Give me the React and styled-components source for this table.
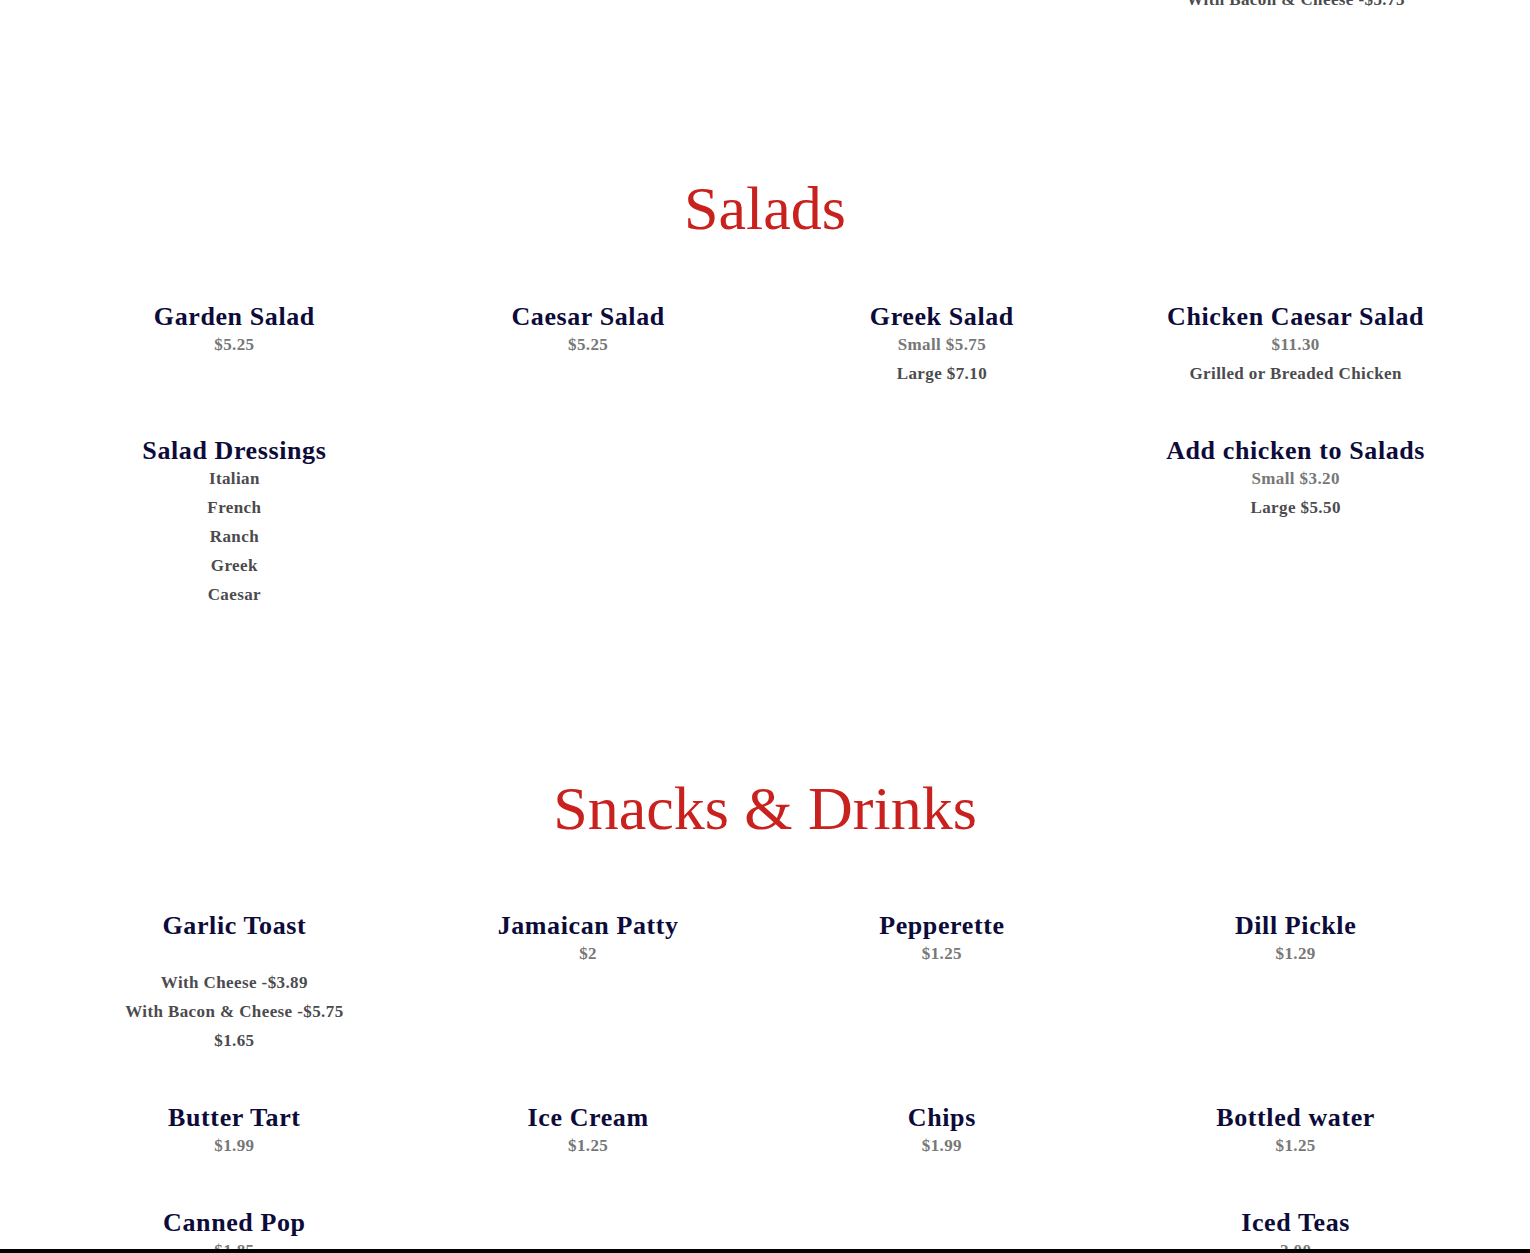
import styled, { createGlobalStyle } from "styled-components"

const GlobalStyle = createGlobalStyle`
  html {
    overflow: hidden;
  }
  html, body {
    margin: 0;
    padding: 0;
    background: #fff;
  }
  body {
    font-family: "Liberation Serif", "Times New Roman", serif;
  }
`

const salads = [
  { name: "Garden Salad", lines: [["$5.25", "price"]] },
  { name: "Caesar Salad", lines: [["$5.25", "price"]] },
  { name: "Greek Salad", lines: [["Small $5.75", "price"], ["Large $7.10", "note"]] },
  { name: "Chicken Caesar Salad", lines: [["$11.30", "price"], ["Grilled or Breaded Chicken", "note"]] },
  {
    name: "Salad Dressings",
    lines: [["Italian", "note"], ["French", "note"], ["Ranch", "note"], ["Greek", "note"], ["Caesar", "note"]]
  },
  null,
  null,
  { name: "Add chicken to Salads", lines: [["Small $3.20", "price"], ["Large $5.50", "note"]] }
]

const snacks = [
  {
    name: "Garlic Toast",
    lines: [["", "blank"], ["With Cheese -$3.89", "note"], ["With Bacon & Cheese -$5.75", "note"], ["$1.65", "note"]]
  },
  { name: "Jamaican Patty", lines: [["$2", "price"]] },
  { name: "Pepperette", lines: [["$1.25", "price"]] },
  { name: "Dill Pickle", lines: [["$1.29", "price"]] },
  { name: "Butter Tart", lines: [["$1.99", "price"]] },
  { name: "Ice Cream", lines: [["$1.25", "price"]] },
  { name: "Chips", lines: [["$1.99", "price"]] },
  { name: "Bottled water", lines: [["$1.25", "price"]] },
  { name: "Canned Pop", lines: [["$1.85", "price"]] },
  null,
  null,
  { name: "Iced Teas", lines: [["2.00", "price"]] }
]

function MenuItem({ item }) {
  if (!item) return <Cell />
  return (
    <Cell>
      <ItemName>{item.name}</ItemName>
      {item.lines.map(([text, tone], i) => (
        <ItemLine key={i} $tone={tone}>{text || "\u00a0"}</ItemLine>
      ))}
    </Cell>
  )
}

function MenuSection({ title, items, gap }) {
  return (
    <Section>
      <Heading $gap={gap}>{title}</Heading>
      <Grid>
        {items.map((item, i) => <MenuItem key={i} item={item} />)}
      </Grid>
    </Section>
  )
}

export default function App() {
  return (
    <Page>
      <GlobalStyle />
      {/* tail of the section above, scrolled mostly out of view */}
      <TailSection>
        <Grid>
          <Cell />
          <Cell />
          <Cell />
          <Cell>
            <ItemLine $tone="note">With Bacon & Cheese -$5.75</ItemLine>
          </Cell>
        </Grid>
      </TailSection>

      <MenuSection title="Salads" items={salads} gap={59} />
      <MenuSection title="Snacks & Drinks" items={snacks} gap={68} />

      <BottomBar />
    </Page>
  )
}

const Page = styled.main`
  width: 1415px;
  margin: 0 auto;
  padding-top: 1px;
`
const TailSection = styled.section`
  margin-top: -16px;
  padding-bottom: 76px;
`
const Section = styled.section`
  padding: 81px 0;
`
const Heading = styled.h2`
  margin: 0 0 ${(props) => props.$gap}px 0;
  text-align: center;
  font-family: "Liberation Serif", "Times New Roman", serif;
  font-weight: 400;
  font-size: 62px;
  line-height: 74px;
  color: #c8211e;
`
const Grid = styled.div`
  display: grid;
  grid-template-columns: repeat(4, 1fr);
  row-gap: 50px;
`
const Cell = styled.div`
  display: flex;
  flex-direction: column;
  align-items: center;
  text-align: center;
`
const ItemName = styled.h3`
  margin: 0;
  font-family: "Liberation Serif", "Times New Roman", serif;
  font-weight: 700;
  font-size: 26px;
  line-height: 26px;
  letter-spacing: 0.6px;
  color: #0d0b3a;
  white-space: nowrap;
`
const ItemLine = styled.p`
  margin: 0;
  font-family: "Liberation Serif", "Times New Roman", serif;
  font-weight: 700;
  font-size: 17px;
  line-height: 29px;
  letter-spacing: 0.4px;
  white-space: nowrap;
  color: ${(props) => (props.$tone === "price" ? "#777777" : "#4b4b4e")};
`
const BottomBar = styled.div`
  position: fixed;
  left: 0;
  right: 0;
  bottom: 0;
  height: 4px;
  background: #000;
`
